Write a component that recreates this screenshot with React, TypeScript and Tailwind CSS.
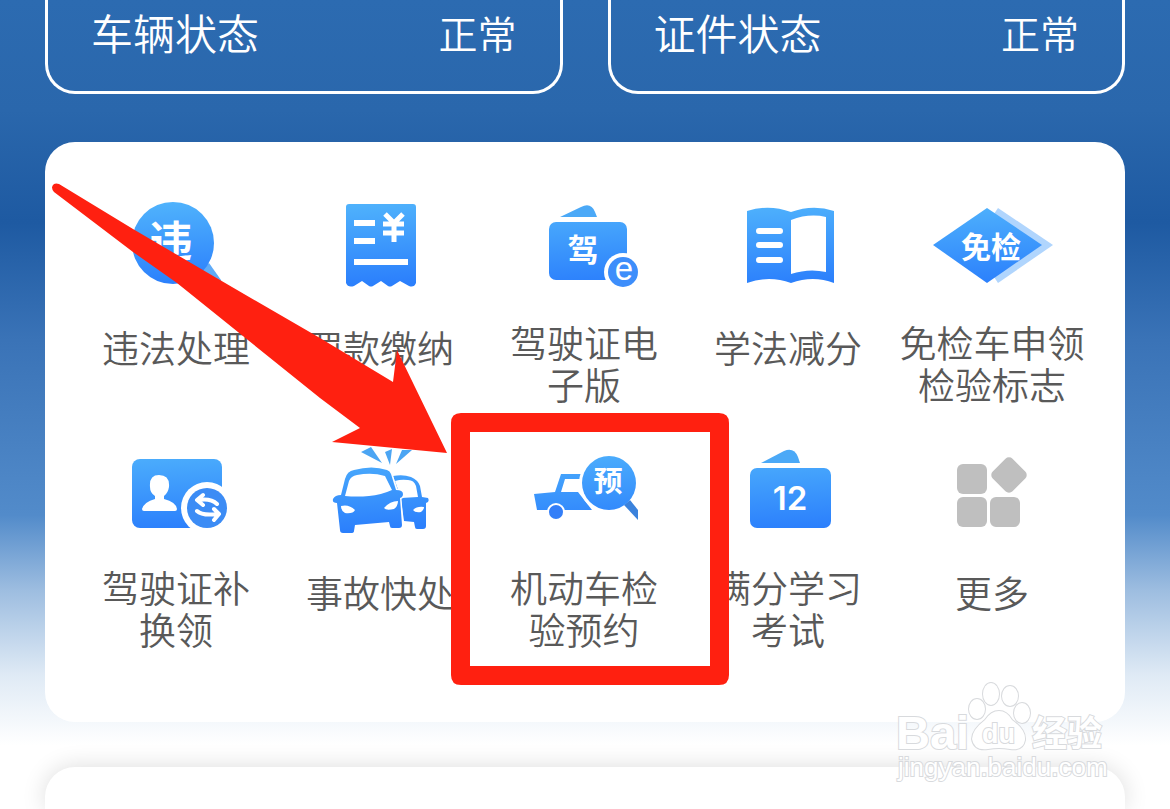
import type { ReactNode } from "react";

interface Service {
  id: string;
  lines: string[];
  icon: ReactNode;
}

const BLUE = "url(#service-blue)";

const glyph = {
  fill: "#fff",
  fontFamily: '"Noto Sans CJK SC", sans-serif',
  fontWeight: 700,
  textAnchor: "middle" as const,
};

const services: Service[] = [
  {
    id: "violation",
    lines: ["违法处理"],
    icon: (
      <>
        <path d="M80 76 L92 68 L104 85 Q106 92 98 88 Z" fill="#5fabf8" />
        <circle cx="56" cy="48" r="41" fill={BLUE} />
        <text x="54" y="62" fontSize="43" {...glyph}>违</text>
      </>
    ),
  },
  {
    id: "fine",
    lines: ["罚款缴纳"],
    icon: (
      <>
        <path
          d="M28 9 H92 Q95 9 95 12 V88 Q93 93 88 91 L79 86 L71 91 Q69 92 67 91 L60 86 L52 91 Q50 92 48 91 L41 86 L33 91 Q27 93 25 88 V12 Q25 9 28 9 Z"
          fill={BLUE}
        />
        <path d="M33 28 H54 M33 46 H54 M33 67 H87" stroke="#fff" strokeWidth="6" />
        <path d="M64 19 L73 28 L82 19 M62 29 H83 M62 38 H83 M73 28 V47" fill="none" stroke="#fff" strokeWidth="5" />
      </>
    ),
  },
  {
    id: "e-license",
    lines: ["驾驶证电", "子版"],
    icon: (
      <>
        <path d="M35 22 L56 12 Q66 7 70 17 L72 22 Z" fill="#4ba9f7" />
        <rect x="24" y="27" width="78" height="58" rx="7" fill={BLUE} />
        <text x="58" y="66" fontSize="31" {...glyph}>驾</text>
        <circle cx="98" cy="77" r="19" fill="#fff" />
        <circle cx="98" cy="77" r="15" fill="#3d8efb" />
        <text x="99" y="85" fontSize="33" fill="#fff" fontFamily='"Liberation Sans", sans-serif' textAnchor="middle">e</text>
      </>
    ),
  },
  {
    id: "study",
    lines: ["学法减分"],
    icon: (
      <>
        <path d="M18 16 Q40 9 62 17 Q84 9 105 16 V88 Q84 80 62 88 Q40 80 18 88 Z" fill={BLUE} />
        <path d="M62 25 Q80 18 97 22 V77 Q80 73 62 79 Z" fill="#fff" />
        <path d="M30 36 H51 M30 50 H51 M30 65 H51" stroke="#fff" strokeWidth="6" strokeLinecap="round" />
      </>
    ),
  },
  {
    id: "exempt",
    lines: ["免检车申领", "检验标志"],
    icon: (
      <>
        <path d="M65 13 L120 50 L65 88 L40 50 Z" fill="#b0d5fd" />
        <path d="M54 13 L109 50 L54 88 L0 50 Z" fill={BLUE} />
        <text x="58" y="63" fontSize="30" {...glyph}>免检</text>
      </>
    ),
  },
  {
    id: "replace",
    lines: ["驾驶证补", "换领"],
    icon: (
      <>
        <rect x="15" y="19" width="90" height="69" rx="8" fill={BLUE} />
        <path
          d="M42 35 Q53 35 52 47 Q51 53 47 56 V59 Q59 62 60 69 Q60 71 58 71 H27 Q25 71 25 69 Q27 62 38 59 V56 Q33 53 33 47 Q32 35 42 35 Z"
          fill="#fff"
        />
        <circle cx="90" cy="68" r="26" fill="#fff" />
        <circle cx="90" cy="68" r="20" fill="#3c8cf5" />
        <path
          d="M86 55 L80 60 L86 65 M81 60 Q94 58 100 64 M97 69 L102 74 L97 80 M80 71 Q85 76 101 74"
          fill="none"
          stroke="#fff"
          strokeWidth="4"
          strokeLinecap="round"
          strokeLinejoin="round"
        />
      </>
    ),
  },
  {
    id: "accident",
    lines: ["事故快处"],
    icon: (
      <>
        <path d="M40 12 L50 7 L61 23 Z M64 12 L71 9 L69 25 Z M75 24 L81 10 L91 10 Z" fill="#4ba5f3" />
        <path
          fillRule="evenodd"
          fill={BLUE}
          d="M72 36 Q82 34 90 37 Q97 40 99 46 L101 57 L107 58 Q109 62 105 63 L105 86 Q105 89 102 89 H96 Q94 89 94 87 L93 82 L83 81 L80 60 Z M74 41 L80 58 L97 57 L95 46 Q93 40 87 40 Q80 39 74 41 Z"
        />
        <path
          d="M20 55 L24 39 Q26 31 33 30 Q51 25 66 30 Q69 31 70 34 L75 50 Q82 50 82 54 Q82 57 79 58 L81 85 Q81 88 78 88 H71 Q69 88 69 86 L68 82 L34 85 L33 91 Q33 93 30 93 H22 Q19 93 19 90 L16 63 Q11 63 12 59 Q14 55 20 55 Z"
          fill={BLUE}
          stroke="#fff"
          strokeWidth="3"
          paintOrder="stroke"
        />
        <path d="M24 56 L28 41 Q30 36 36 35 Q51 32 64 36 L71 50 Q60 55 48 56 Q36 57 24 56 Z" fill="#fff" />
        <path d="M20 66 Q28 64 34 70 Q32 74 24 73 Q20 71 20 66 Z M77 61 Q69 61 63 68 Q65 71 73 69 Q77 66 77 61 Z" fill="#fff" />
        <path d="M103 67 Q96 66 92 70 Q94 73 100 72 Q103 70 103 67 Z" fill="#fff" />
      </>
    ),
  },
  {
    id: "inspection",
    lines: ["机动车检", "验预约"],
    icon: (
      <>
        <path d="M9 54 L30 52 L36 34 H56 V39 H40 L36 52 H53 L67 70 H12 Z" fill={BLUE} />
        <circle cx="31" cy="72" r="9" fill="#fff" />
        <circle cx="31" cy="72" r="7" fill="#347ff8" />
        <circle cx="84" cy="43" r="30" fill="#fff" />
        <path d="M99 65 L105 60 L113 70 V80 Z" fill="#3b82dc" />
        <circle cx="84" cy="43" r="27" fill={BLUE} />
        <text x="83" y="52" fontSize="29" {...glyph}>预</text>
      </>
    ),
  },
  {
    id: "full-score",
    lines: ["满分学习", "考试"],
    icon: (
      <>
        <path d="M32 23 L55 11 Q65 7 69 17 L71 23 Z" fill="#4ba9f7" />
        <rect x="21" y="28" width="81" height="60" rx="7" fill={BLUE} />
        <text x="61" y="70" fontSize="33" fontWeight="600" fill="#fff" fontFamily="Inter, sans-serif" textAnchor="middle">12</text>
      </>
    ),
  },
  {
    id: "more",
    lines: ["更多"],
    icon: (
      <g fill="#bfbfbf">
        <rect x="24" y="24" width="30" height="30" rx="6" />
        <rect x="24" y="57" width="30" height="30" rx="6" />
        <rect x="57" y="57" width="30" height="30" rx="6" />
        <rect x="62" y="21" width="28" height="28" rx="5" transform="rotate(45 76 35)" />
      </g>
    ),
  },
];

function StatusCard({ label, value }: { label: string; value: string }) {
  return (
    <div className="flex-1 flex items-center justify-between rounded-b-[30px] border-3 border-t-0 border-white px-[43px] pt-1.5 pb-[25px] text-white font-[350]">
      <span className="text-[42px] leading-[60px]">{label}</span>
      <span className="text-[39px] leading-[60px]">{value}</span>
    </div>
  );
}

function ServiceTile({ service }: { service: Service }) {
  const single = service.lines.length === 1;
  return (
    <button type="button" className="flex flex-col items-center">
      <svg viewBox="0 0 120 100" className="w-[120px] h-[100px]" aria-hidden="true">
        {service.icon}
      </svg>
      <span
        className={`block h-[84px] mt-[30px] pr-0.5 text-[37px] leading-[42px] font-[350] text-[#595959] whitespace-nowrap ${
          single ? "pt-[5px]" : ""
        }`}
      >
        {service.lines.map((line) => (
          <span key={line} className="block">{line}</span>
        ))}
      </span>
    </button>
  );
}

function Annotation() {
  return (
    <svg width="1080" height="580" viewBox="0 0 1080 580" className="absolute left-0 top-0 pointer-events-none" aria-hidden="true">
      <defs>
        <linearGradient id="service-blue" gradientUnits="userSpaceOnUse" x1="50" y1="8" x2="55" y2="90">
          <stop offset="0" stopColor="#4fb2fc" />
          <stop offset="1" stopColor="#2b7ffc" />
        </linearGradient>
      </defs>
      <path
        d="M14 42 L88 87 L175 138 L275 196 L348 240 L352 208 L402 311 L287 300 L315 286 L275 256 L132 141 L88 110 L9 50 Q5 45 9 42 Q11 41 14 42 Z"
        fill="#ff2010"
      />
      <path
        fillRule="evenodd"
        d="M416 271 H674 Q684 271 684 281 V533 Q684 543 674 543 H416 Q406 543 406 533 V281 Q406 271 416 271 Z M425 290 V524 H665 V290 Z"
        fill="#ff2010"
      />
    </svg>
  );
}

function Watermark() {
  return (
    <svg
      width="220"
      height="110"
      viewBox="0 0 220 110"
      className="absolute right-[60px] bottom-[19px] pointer-events-none"
      fill="#fff"
      stroke="#d8dadd"
      strokeWidth="2"
      paintOrder="stroke"
      fontFamily='"Liberation Sans", "Noto Sans CJK SC", sans-serif'
      fontWeight="700"
    >
      <text x="6" y="69" fontSize="47">Bai</text>
      <ellipse cx="87" cy="29" rx="8" ry="10" />
      <ellipse cx="101" cy="14" rx="8" ry="11" />
      <ellipse cx="120" cy="16" rx="8" ry="10" />
      <ellipse cx="132" cy="33" rx="8" ry="10" />
      <path d="M109 31 Q117 31 122 40 Q136 50 135 60 Q133 71 120 69 Q109 67 98 69 Q84 71 82 59 Q82 50 95 40 Q101 31 109 31 Z" />
      <text x="92" y="63" fontSize="27">du</text>
      <text x="142" y="66" fontSize="35">经验</text>
      <text x="8" y="96" fontSize="26" fontWeight="400">jingyan.baidu.com</text>
    </svg>
  );
}

export default function App() {
  return (
    <main className="relative flex flex-col min-h-screen overflow-hidden px-[45px] bg-white bg-[linear-gradient(180deg,#2c6bb1_0px,#2a67ac_110px,#1e5aa2_222px,#3a73b7_340px,#528bca_515px,#9dbde0_590px,#dfeaf5_675px,#ffffff_745px)] font-['Liberation_Sans','Noto_Sans_CJK_SC',sans-serif]">
      <header className="flex gap-[45px]">
        <StatusCard label="车辆状态" value="正常" />
        <StatusCard label="证件状态" value="正常" />
      </header>

      <section className="relative mt-12 rounded-[30px] bg-white px-[30px] pt-[53px] pb-[68px]">
        <div className="grid grid-cols-5 gap-y-[31px]">
          {services.map((service) => (
            <ServiceTile key={service.id} service={service} />
          ))}
        </div>
        <Annotation />
      </section>

      <section className="flex-1 mt-[45px] min-h-10 rounded-t-[30px] bg-white shadow-[0_0_24px_rgba(0,0,0,0.14)]" />

      <Watermark />
    </main>
  );
}
